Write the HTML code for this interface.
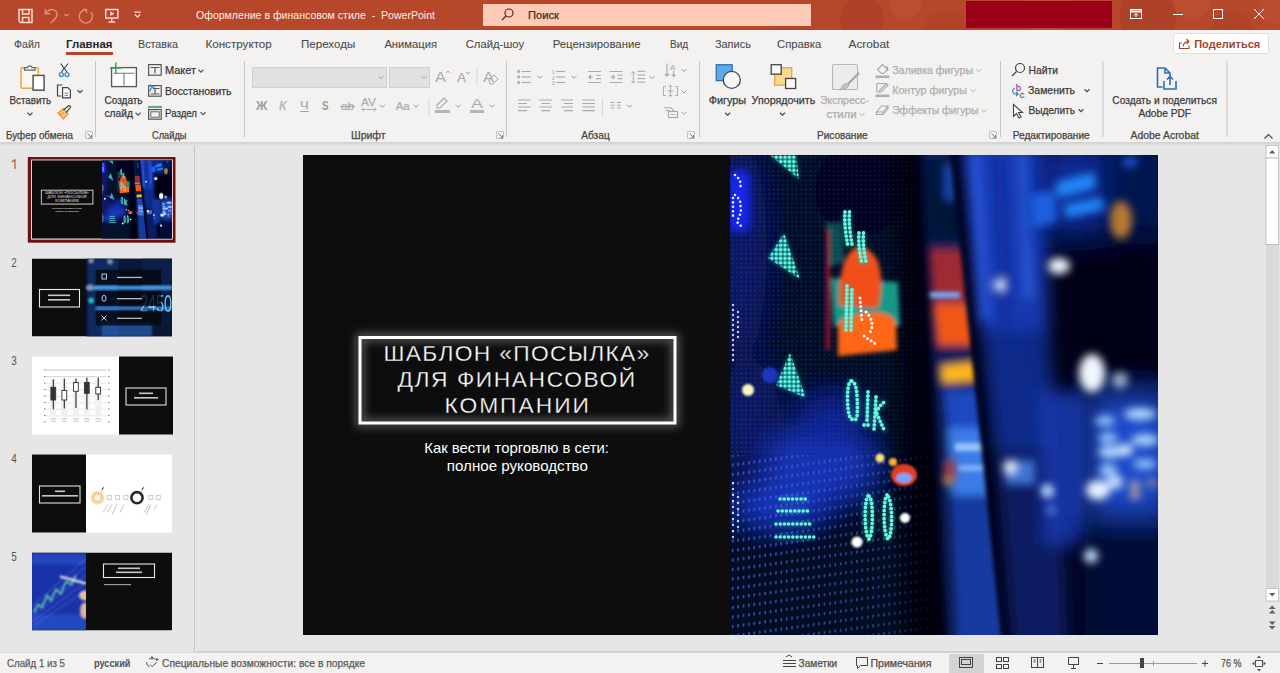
<!DOCTYPE html>
<html><head><meta charset="utf-8"><title>PowerPoint</title>
<style>html,body{margin:0;padding:0;width:1280px;height:673px;overflow:hidden;background:#e6e6e6;}
svg text{font-family:"Liberation Sans", sans-serif;}</style></head>
<body>
<svg width="1280" height="673" viewBox="0 0 1280 673" style="position:absolute;left:0;top:0">
<defs>
<filter id="b2" x="-50%" y="-50%" width="200%" height="200%"><feGaussianBlur stdDeviation="2"/></filter>
<filter id="b4" x="-50%" y="-50%" width="200%" height="200%"><feGaussianBlur stdDeviation="4"/></filter>
<filter id="b8" x="-50%" y="-50%" width="200%" height="200%"><feGaussianBlur stdDeviation="8"/></filter>
<filter id="b14" x="-50%" y="-50%" width="200%" height="200%"><feGaussianBlur stdDeviation="14"/></filter>
<filter id="b1" x="-50%" y="-50%" width="200%" height="200%"><feGaussianBlur stdDeviation="1"/></filter>
<filter id="glow" x="-20%" y="-30%" width="140%" height="160%"><feGaussianBlur stdDeviation="4"/></filter>
<pattern id="dots" x="0" y="0" width="5.2" height="5.2" patternUnits="userSpaceOnUse"><circle cx="2.6" cy="2.6" r="1.1" fill="#fff"/></pattern>
<pattern id="dotsT" x="0" y="0" width="5.2" height="5.2" patternUnits="userSpaceOnUse"><circle cx="2.6" cy="2.6" r="1.9" fill="#fff"/></pattern>
<clipPath id="photoclip"><rect x="730" y="155" width="428" height="480"/></clipPath>
<linearGradient id="shadow" x1="0" y1="0" x2="0" y2="1"><stop offset="0" stop-color="#d0d0d0"/><stop offset="1" stop-color="#e6e6e6"/></linearGradient>
<clipPath id="tbclip"><rect x="0" y="0" width="1280" height="30"/></clipPath>
</defs>
<g font-family='"Liberation Sans", sans-serif'>
<rect x="0" y="0" width="1280" height="673" fill="#e6e6e6" />
<rect x="0" y="0" width="1280" height="30" fill="#b7472a" />
<g opacity="0.4" clip-path="url(#tbclip)">
<circle cx="862" cy="18" r="22" fill="#a33d26"/>
<circle cx="945" cy="32" r="22" fill="#a83f27"/>
<circle cx="1148" cy="16" r="28" fill="#a23c26"/>
<circle cx="1232" cy="30" r="20" fill="#a83f27"/>
<circle cx="905" cy="4" r="16" fill="#c4573a"/>
<circle cx="1045" cy="8" r="26" fill="#c25539"/>
<circle cx="1192" cy="2" r="18" fill="#c4573a"/>
<circle cx="1275" cy="8" r="16" fill="#c25539"/>
<circle cx="790" cy="26" r="14" fill="#ac4229"/>
</g>
<rect x="0" y="30" width="1280" height="113" fill="#f3f2f1" />
<rect x="0" y="142" width="1280" height="4" fill="url(#shadow)" />
<rect x="0" y="652" width="1280" height="21" fill="#f3f2f1" />
<rect x="0" y="652" width="1280" height="1" fill="#d6d6d6" />
<g fill="none" stroke="#f7dcd2" stroke-width="1.5">
<path d="M19 9.5 h13 v13 h-11.5 l-1.5 -1.5 z"/><path d="M22.5 9.5 v4.5 h6.5 v-4.5"/><path d="M22.5 22.5 v-5 h6.5 v5"/>
</g>
<g fill="none" stroke="#e0907a" stroke-width="1.4">
<path d="M45.5 13.5 c2 -3 4 -4 6.5 -4 c3 0 5 2.2 5 5 c0 3 -2.5 5.5 -6.5 8.5"/><path d="M45.3 9 v4.8 h4.8"/>
<path d="M64.3 14 l2.2 2 l2.2 -2" stroke-width="1.1"/>
<path d="M85.5 9.8 a6.6 6.6 0 1 0 5.5 2.5"/><path d="M83 9.5 h3.5 v3.5" />
</g>
<g fill="none" stroke="#f7dcd2" stroke-width="1.4">
<path d="M105.7 9.5 h12.2 v8.5 h-12.2 z"/><path d="M111.8 18 v4 M108.5 22 h6.6"/>
</g>
<path d="M110.3 11.3 l4 2.4 l-4 2.4 z" fill="#f7dcd2"/>
<g fill="none" stroke="#f7dcd2" stroke-width="1.3"><path d="M134.3 12.2 h6.4"/><path d="M134.8 14.5 l2.7 2.5 l2.7 -2.5"/></g>
<text x="196" y="19" font-size="11.5" fill="#fdeee8" font-weight="normal" textLength="239.0" lengthAdjust="spacingAndGlyphs" >Оформление в финансовом стиле  -  PowerPoint</text>
<rect x="483" y="4" width="328" height="22" fill="#fccab5" />
<g fill="none" stroke="#5a2a1e" stroke-width="1.2"><circle cx="509" cy="13" r="4"/><path d="M506 16 l-4 4"/></g>
<text x="528" y="19" font-size="11.5" fill="#4a2a22" font-weight="normal" textLength="31.0" lengthAdjust="spacingAndGlyphs" stroke="#4a2a22" stroke-width="0.25" >Поиск</text>
<rect x="966" y="1" width="146" height="27" fill="#9b0019" />
<g fill="none" stroke="#ffffff" stroke-width="1">
<rect x="1130.5" y="9.5" width="11" height="9"/><path d="M1131 11.5 h10" stroke-width="2"/><path d="M1136 17.5 v-4 M1134 15.5 l2 -2 l2 2"/>
<path d="M1173 14.5 h10"/>
<rect x="1213.5" y="9.5" width="9" height="9"/>
<path d="M1254 9 l10 10 M1264 9 l-10 10"/>
</g>
<text x="14" y="48" font-size="11" fill="#4a4a4a" font-weight="normal" textLength="26.0" lengthAdjust="spacingAndGlyphs" stroke="#4a4a4a" stroke-width="0.08" >Файл</text>
<text x="205.4" y="48" font-size="11" fill="#4a4a4a" font-weight="normal" textLength="66.4" lengthAdjust="spacingAndGlyphs" stroke="#4a4a4a" stroke-width="0.08" >Конструктор</text>
<text x="301" y="48" font-size="11" fill="#4a4a4a" font-weight="normal" textLength="54.2" lengthAdjust="spacingAndGlyphs" stroke="#4a4a4a" stroke-width="0.08" >Переходы</text>
<text x="384.4" y="48" font-size="11" fill="#4a4a4a" font-weight="normal" textLength="52.6" lengthAdjust="spacingAndGlyphs" stroke="#4a4a4a" stroke-width="0.08" >Анимация</text>
<text x="465.7" y="48" font-size="11" fill="#4a4a4a" font-weight="normal" textLength="58.4" lengthAdjust="spacingAndGlyphs" stroke="#4a4a4a" stroke-width="0.08" >Слайд-шоу</text>
<text x="552.7" y="48" font-size="11" fill="#4a4a4a" font-weight="normal" textLength="88.0" lengthAdjust="spacingAndGlyphs" stroke="#4a4a4a" stroke-width="0.08" >Рецензирование</text>
<text x="669.9" y="48" font-size="11" fill="#4a4a4a" font-weight="normal" textLength="18.3" lengthAdjust="spacingAndGlyphs" stroke="#4a4a4a" stroke-width="0.08" >Вид</text>
<text x="714.9" y="48" font-size="11" fill="#4a4a4a" font-weight="normal" textLength="36.0" lengthAdjust="spacingAndGlyphs" stroke="#4a4a4a" stroke-width="0.08" >Запись</text>
<text x="777" y="48" font-size="11" fill="#4a4a4a" font-weight="normal" textLength="44.2" lengthAdjust="spacingAndGlyphs" stroke="#4a4a4a" stroke-width="0.08" >Справка</text>
<text x="848.5" y="48" font-size="11" fill="#4a4a4a" font-weight="normal" textLength="40.8" lengthAdjust="spacingAndGlyphs" stroke="#4a4a4a" stroke-width="0.08" >Acrobat</text>
<text x="138" y="48" font-size="11" fill="#4a4a4a" font-weight="normal" textLength="40.0" lengthAdjust="spacingAndGlyphs" stroke="#4a4a4a" stroke-width="0.08" >Вставка</text>
<text x="66" y="48" font-size="11" fill="#262626" font-weight="bold" textLength="46.5" lengthAdjust="spacingAndGlyphs" >Главная</text>
<rect x="66" y="52" width="47" height="3" fill="#b7472a" />
<rect x="1173.5" y="33.5" width="95" height="20" fill="#ffffff" stroke="#e1dfdd" rx="2"/>
<g fill="none" stroke="#a5442b" stroke-width="1.1"><path d="M1182 43 h-2.5 v5.5 h9.5 v-3"/><path d="M1183 46.5 c0.5 -3.5 2.5 -5 6 -5 M1186.5 39 l2.5 2.5 l-2.5 2.5"/></g>
<text x="1194.2" y="47.8" font-size="11.6" fill="#a5442b" font-weight="bold" textLength="66.1" lengthAdjust="spacingAndGlyphs" >Поделиться</text>
<rect x="95" y="61" width="1" height="76" fill="#c8c6c4" />
<rect x="244" y="61" width="1" height="76" fill="#c8c6c4" />
<rect x="506" y="61" width="1" height="76" fill="#c8c6c4" />
<rect x="699" y="61" width="1" height="76" fill="#c8c6c4" />
<rect x="1000" y="61" width="1" height="76" fill="#c8c6c4" />
<rect x="1102.5" y="61" width="1" height="76" fill="#c8c6c4" />
<rect x="1226.5" y="61" width="1" height="76" fill="#c8c6c4" />
<text x="6" y="138.5" font-size="10" fill="#444444" font-weight="normal" textLength="67.0" lengthAdjust="spacingAndGlyphs" stroke="#444444" stroke-width="0.25" >Буфер обмена</text>
<text x="152" y="138.5" font-size="10" fill="#444444" font-weight="normal" textLength="34.5" lengthAdjust="spacingAndGlyphs" stroke="#444444" stroke-width="0.25" >Слайды</text>
<text x="351" y="138.5" font-size="10" fill="#444444" font-weight="normal" textLength="34.6" lengthAdjust="spacingAndGlyphs" stroke="#444444" stroke-width="0.25" >Шрифт</text>
<text x="581.3" y="138.5" font-size="10" fill="#444444" font-weight="normal" textLength="28.4" lengthAdjust="spacingAndGlyphs" stroke="#444444" stroke-width="0.25" >Абзац</text>
<text x="817" y="138.5" font-size="10" fill="#444444" font-weight="normal" textLength="50.6" lengthAdjust="spacingAndGlyphs" stroke="#444444" stroke-width="0.25" >Рисование</text>
<text x="1012.7" y="138.5" font-size="10" fill="#444444" font-weight="normal" textLength="77.0" lengthAdjust="spacingAndGlyphs" stroke="#444444" stroke-width="0.25" >Редактирование</text>
<text x="1130.5" y="138.5" font-size="10" fill="#444444" font-weight="normal" textLength="68.4" lengthAdjust="spacingAndGlyphs" stroke="#444444" stroke-width="0.25" >Adobe Acrobat</text>
<g fill="none" stroke="#8a8886" stroke-width="1"><path d="M85.5 131.5 h7 v7 h-7 z" stroke="#c8c6c4"/><path d="M87.5 133.5 l4 4 M91.5 135 v3 h-3"/></g>
<g fill="none" stroke="#8a8886" stroke-width="1"><path d="M496.5 131.5 h7 v7 h-7 z" stroke="#c8c6c4"/><path d="M498.5 133.5 l4 4 M502.5 135 v3 h-3"/></g>
<g fill="none" stroke="#8a8886" stroke-width="1"><path d="M687.5 131.5 h7 v7 h-7 z" stroke="#c8c6c4"/><path d="M689.5 133.5 l4 4 M693.5 135 v3 h-3"/></g>
<g fill="none" stroke="#8a8886" stroke-width="1"><path d="M989.5 131.5 h7 v7 h-7 z" stroke="#c8c6c4"/><path d="M991.5 133.5 l4 4 M995.5 135 v3 h-3"/></g>
<path d="M1264.5 138.5 l4 -4 l4 4" fill="none" stroke="#444" stroke-width="1.2"/>
<rect x="21" y="67.7" width="17.3" height="20.5" rx="1.5" fill="#fdf8ef" stroke="#e8a840" stroke-width="1.5"/>
<path d="M24.5 70.2 h10.5 v-2.6 h-3 a2.3 2.3 0 0 0 -4.5 0 h-3 z" fill="#fff" stroke="#606060" stroke-width="1.2"/>
<rect x="33.1" y="75.4" width="11" height="14.8" fill="#fff" stroke="#555" stroke-width="1.5"/>
<text x="9.5" y="103.6" font-size="10.5" fill="#3b3b3b" font-weight="normal" textLength="41.5" lengthAdjust="spacingAndGlyphs" stroke="#3b3b3b" stroke-width="0.25" >Вставить</text>
<path d="M27.5 112.55 L30 115.05 L32.5 112.55" fill="none" stroke="#444" stroke-width="1.2"/>
<g fill="none" stroke="#3a3a3a" stroke-width="1.1"><path d="M60.5 63.5 l6.5 8.5 M68 63.5 l-6.5 8.5"/></g>
<g fill="none" stroke="#2f8ad0" stroke-width="1.3"><circle cx="61.3" cy="74.6" r="2"/><circle cx="66.9" cy="74.6" r="2"/></g>
<path d="M62.5 85 h-5 v11 h4" fill="none" stroke="#444" stroke-width="1.2"/>
<path d="M62.6 87.6 h5.2 l2.6 2.6 v7.7 h-7.8 z" fill="#fff" stroke="#444" stroke-width="1.2"/>
<path d="M64.6 93.2 h3.6 M64.6 95.4 h3.6" stroke="#666" stroke-width="0.9"/>
<path d="M77.5 90.25 L80 92.75 L82.5 90.25" fill="none" stroke="#444" stroke-width="1.2"/>
<path d="M57.8 113.2 l5.6 -4.6 l4.6 5.4 l-4.8 5 c-1.5 -2 -3.5 -4 -5.4 -5.8 z" fill="#f9c27a" stroke="#ea8c2a" stroke-width="1.1"/>
<path d="M60 115 l4.5 -3" stroke="#ea8c2a" stroke-width="0.9"/>
<path d="M63.5 110 l5 -4.2 a1.3 1.3 0 0 1 1.8 1.8 l-4.3 5" fill="none" stroke="#444" stroke-width="1.2"/>
<rect x="111.6" y="67.6" width="24.8" height="19" fill="#fff" stroke="#555" stroke-width="1.3"/>
<path d="M113.5 73.3 h21 M124 73.3 v12" fill="none" stroke="#777" stroke-width="1.1"/>
<path d="M115.8 62.5 v11.5 M110 68 h12" stroke="#3fa060" stroke-width="1.5"/>
<text x="104.5" y="103.8" font-size="10.5" fill="#3b3b3b" font-weight="normal" textLength="38.1" lengthAdjust="spacingAndGlyphs" stroke="#3b3b3b" stroke-width="0.25" >Создать</text>
<text x="104.5" y="117.4" font-size="10.5" fill="#3b3b3b" font-weight="normal" textLength="28.5" lengthAdjust="spacingAndGlyphs" stroke="#3b3b3b" stroke-width="0.25" >слайд</text>
<path d="M135.5 112.75 L138 115.25 L140.5 112.75" fill="none" stroke="#555" stroke-width="1.1"/>
<g fill="none" stroke="#555" stroke-width="1.2">
<rect x="148.6" y="64.6" width="12.6" height="10.6"/><path d="M150.5 67.5 h9 M155 67.5 v5.8"/>
<rect x="148.6" y="85.6" width="12.6" height="10.6"/><path d="M153 88.5 h6.5 M155 88.5 v5.8 M150.5 94 h9"/>
<rect x="148.6" y="109.6" width="12.6" height="9.6"/><rect x="150.8" y="111.8" width="8.4" height="5.4" stroke-width="0.9"/>
</g>
<path d="M148 107 h14" stroke="#5fae78" stroke-width="2.2"/>
<path d="M150 91.5 c0 -3 2 -5 5 -4.5 M148 87.5 l2.2 -2.5 l2.2 2.5" fill="none" stroke="#2f8ad0" stroke-width="1.2"/>
<text x="165" y="74.3" font-size="10.5" fill="#3b3b3b" font-weight="normal" textLength="31.0" lengthAdjust="spacingAndGlyphs" stroke="#3b3b3b" stroke-width="0.25" >Макет</text>
<path d="M198.5 69.75 L201 72.25 L203.5 69.75" fill="none" stroke="#555" stroke-width="1.1"/>
<text x="165" y="95.3" font-size="10.5" fill="#3b3b3b" font-weight="normal" textLength="66.4" lengthAdjust="spacingAndGlyphs" stroke="#3b3b3b" stroke-width="0.25" >Восстановить</text>
<text x="165" y="116.8" font-size="10.5" fill="#3b3b3b" font-weight="normal" textLength="32.0" lengthAdjust="spacingAndGlyphs" stroke="#3b3b3b" stroke-width="0.25" >Раздел</text>
<path d="M200.5 112.25 L203 114.75 L205.5 112.25" fill="none" stroke="#555" stroke-width="1.1"/>
<rect x="252.5" y="67.5" width="134" height="20" fill="#e1e1e1" stroke="#d2d0ce"/>
<rect x="389.5" y="67.5" width="40" height="20" fill="#e1e1e1" stroke="#d2d0ce"/>
<path d="M378.5 76.25 L381 78.75 L383.5 76.25" fill="none" stroke="#9a9a9a" stroke-width="1"/>
<path d="M421.5 76.25 L424 78.75 L426.5 76.25" fill="none" stroke="#9a9a9a" stroke-width="1"/>
<text x="435" y="82" font-size="15" fill="#adadad" font-weight="normal" textLength="11.0" lengthAdjust="spacingAndGlyphs" >A</text>
<path d="M446 73 l2 -2 l2 2" fill="none" stroke="#a6a6a6" stroke-width="1"/>
<text x="457" y="82" font-size="12.5" fill="#adadad" font-weight="normal" textLength="9.0" lengthAdjust="spacingAndGlyphs" stroke="#adadad" stroke-width="0.25" >A</text>
<path d="M466 72 l2 2 l2 -2" fill="none" stroke="#a6a6a6" stroke-width="1"/>
<rect x="476.5" y="68" width="1" height="18" fill="#d6d6d6" />
<text x="483" y="82" font-size="14" fill="#adadad" font-weight="normal" textLength="11.0" lengthAdjust="spacingAndGlyphs" >A</text>
<path d="M489 80 l5 -5 l4 4 l-5 5 h-3 z" fill="none" stroke="#a6a6a6" stroke-width="1"/>
<text x="256" y="110" font-size="12.5" fill="#9a9a9a" font-weight="bold" textLength="11.4" lengthAdjust="spacingAndGlyphs" >Ж</text>
<text x="279" y="110" font-size="12" fill="#adadad" font-weight="normal" textLength="7.4" lengthAdjust="spacingAndGlyphs" stroke="#adadad" stroke-width="0.25" font-style="italic">К</text>
<text x="300" y="109" font-size="10.5" fill="#adadad" font-weight="normal" textLength="8.6" lengthAdjust="spacingAndGlyphs" stroke="#adadad" stroke-width="0.25" >Ч</text>
<rect x="300" y="111" width="9" height="1" fill="#a6a6a6" />
<text x="322" y="110" font-size="12.5" fill="#9a9a9a" font-weight="bold" textLength="6.5" lengthAdjust="spacingAndGlyphs" >S</text>
<text x="341" y="110" font-size="10.5" fill="#adadad" font-weight="normal" textLength="13.0" lengthAdjust="spacingAndGlyphs" stroke="#adadad" stroke-width="0.25" >ab</text>
<rect x="340" y="106" width="15" height="1" fill="#a6a6a6" />
<text x="361" y="106" font-size="11" fill="#adadad" font-weight="normal" textLength="15.0" lengthAdjust="spacingAndGlyphs" stroke="#adadad" stroke-width="0.25" >AV</text>
<path d="M362 109.5 h14 M364 107.5 l-2 2 l2 2 M374 107.5 l2 2 l-2 2" fill="none" stroke="#a6a6a6" stroke-width="0.9"/>
<path d="M380.0 104.75 L382.5 107.25 L385.0 104.75" fill="none" stroke="#9a9a9a" stroke-width="1"/>
<text x="395.7" y="110" font-size="10.5" fill="#adadad" font-weight="normal" textLength="14.1" lengthAdjust="spacingAndGlyphs" stroke="#adadad" stroke-width="0.25" >Aa</text>
<path d="M413.5 104.75 L416 107.25 L418.5 104.75" fill="none" stroke="#9a9a9a" stroke-width="1"/>
<rect x="428.5" y="98" width="1" height="18" fill="#d6d6d6" />
<path d="M437 105 l7 -7 l3 3 l-7 7 h-3 z" fill="none" stroke="#a6a6a6" stroke-width="1.1"/>
<rect x="435" y="110" width="15" height="3" fill="#b4b4b4" />
<path d="M455.5 104.75 L458 107.25 L460.5 104.75" fill="none" stroke="#9a9a9a" stroke-width="1"/>
<text x="471" y="108" font-size="13" fill="#adadad" font-weight="normal" textLength="12.0" lengthAdjust="spacingAndGlyphs" >A</text>
<rect x="470" y="110" width="14" height="3" fill="#b4b4b4" />
<path d="M489.5 104.75 L492 107.25 L494.5 104.75" fill="none" stroke="#9a9a9a" stroke-width="1"/>
<g stroke="#a8a8a8" stroke-width="1.1" fill="none">
<rect x="517.3" y="70.2" width="2.6" height="2.6" fill="#a8a8a8" stroke="none"/><path d="M521.5 71.5 h9.3"/>
<path d="M556.3 71.5 h8.7"/>
<rect x="517.3" y="75.7" width="2.6" height="2.6" fill="#a8a8a8" stroke="none"/><path d="M521.5 77 h9.3"/>
<path d="M556.3 77 h8.7"/>
<rect x="517.3" y="81.2" width="2.6" height="2.6" fill="#a8a8a8" stroke="none"/><path d="M521.5 82.5 h9.3"/>
<path d="M556.3 82.5 h8.7"/>
<path d="M588.3 71.5 h12.6 M596 75.2 h5 M596 78.6 h5 M588.3 82.5 h12.6 M589 77 h4 M591 75 l-2 2 l2 2"/>
<path d="M609.7 71.5 h12.6 M617.6 75.2 h4.7 M617.6 78.6 h4.7 M609.7 82.5 h12.6 M610.5 77 h4 M612.5 75 l2 2 l-2 2"/>
<path d="M637.5 71.3 h7.7"/>
<path d="M637.5 75 h7.7"/>
<path d="M637.5 78.6 h7.7"/>
<path d="M637.5 82.2 h7.7"/>
<path d="M633.3 71.5 v11.5 M631.3 73.5 l2 -2 l2 2 M631.3 81 l2 2 l2 -2" stroke-width="0.9"/>
<path d="M518 100 h12.7 M539.5 100 h12.5 M561 100 h12 M582.3 100 h12.6"/>
<path d="M518 103.5 h9 M541.5 103.5 h8.5 M564 103.5 h9 M582.3 103.5 h12.6"/>
<path d="M518 107 h12.7 M539.5 107 h12.5 M561 107 h12 M582.3 107 h12.6"/>
<path d="M518 110.6 h9 M541.5 110.6 h8.5 M564 110.6 h9 M582.3 110.6 h12.6"/>
</g>
<text x="551.8" y="74" font-size="5.5" fill="#a8a8a8">1</text><text x="551.8" y="79.5" font-size="5.5" fill="#a8a8a8">2</text><text x="551.8" y="85" font-size="5.5" fill="#a8a8a8">3</text>
<path d="M537.1 75.75 L539.6 78.25 L542.1 75.75" fill="none" stroke="#9a9a9a" stroke-width="1"/>
<path d="M571.5 75.75 L574 78.25 L576.5 75.75" fill="none" stroke="#9a9a9a" stroke-width="1"/>
<path d="M649.3 76.25 L651.8 78.75 L654.3 76.25" fill="none" stroke="#9a9a9a" stroke-width="1"/>
<rect x="602" y="98" width="1" height="18" fill="#d6d6d6" />
<g stroke="#a8a8a8" stroke-width="1.1" fill="none"><path d="M610.5 102.5 h4 M610.5 105.3 h4 M610.5 108 h4 M617 102.5 h4 M617 105.3 h4 M617 108 h4"/></g>
<path d="M627.0 104.75 L629.5 107.25 L632.0 104.75" fill="none" stroke="#9a9a9a" stroke-width="1"/>
<g stroke="#a6a6a6" stroke-width="1.1" fill="none">
<path d="M667 63.5 v12.5 M664.8 73.8 l2.2 2.2 l2.2 -2.2 M673.7 70.5 v6 M671.8 74.6 l1.9 1.9 l1.9 -1.9"/>
<path d="M666 86.5 h-2.5 v9 h2.5 M675 86.5 h2.5 v9 h-2.5 M670.5 85 v11.5 M668.8 86.8 l1.7 -1.7 l1.7 1.7 M668.8 94.8 l1.7 1.7 l1.7 -1.7 M667.5 91 h6" stroke-width="0.9"/>
<path d="M664 107.8 h7 l3.5 3.5 M665.5 110.5 h4.5"/><rect x="668.5" y="111.5" width="9" height="6"/><path d="M670.5 114.5 h5" stroke-width="0.8"/>
</g>
<text x="670" y="69.5" font-size="8" fill="#a6a6a6">A</text>
<path d="M681.6 68.95 L684.1 71.45 L686.6 68.95" fill="none" stroke="#9a9a9a" stroke-width="1"/>
<path d="M681.6 90.45 L684.1 92.95 L686.6 90.45" fill="none" stroke="#9a9a9a" stroke-width="1"/>
<path d="M681.6 111.85 L684.1 114.35 L686.6 111.85" fill="none" stroke="#9a9a9a" stroke-width="1"/>
<rect x="716.2" y="64.7" width="16" height="16" fill="#5eaae8" stroke="#2f6aa6" stroke-width="1.2"/>
<circle cx="731.8" cy="79.9" r="8.5" fill="#f6f6f6" stroke="#444" stroke-width="1.3"/>
<text x="708.7" y="103.8" font-size="10.5" fill="#3b3b3b" font-weight="normal" textLength="37.5" lengthAdjust="spacingAndGlyphs" stroke="#3b3b3b" stroke-width="0.25" >Фигуры</text>
<path d="M725.2 112.75 L727.7 115.25 L730.2 112.75" fill="none" stroke="#444" stroke-width="1.1"/>
<rect x="774.7" y="67.7" width="17" height="17.5" fill="#f8d98e" stroke="#e3a642" stroke-width="1.3"/>
<rect x="771.2" y="64.7" width="10" height="9.5" fill="#f8f8f8" stroke="#444" stroke-width="1.3"/>
<rect x="785.6" y="78.5" width="10" height="10" fill="#f8f8f8" stroke="#444" stroke-width="1.3"/>
<text x="751.6" y="103.8" font-size="10.5" fill="#3b3b3b" font-weight="normal" textLength="63.7" lengthAdjust="spacingAndGlyphs" stroke="#3b3b3b" stroke-width="0.25" >Упорядочить</text>
<path d="M780.0 112.75 L782.5 115.25 L785.0 112.75" fill="none" stroke="#444" stroke-width="1.1"/>
<rect x="832.5" y="64.5" width="25" height="25" fill="#ececec" stroke="#b6b6b6" stroke-width="1.1" rx="1"/>
<path d="M858.5 73.5 l-11 11" stroke="#a6a6a6" stroke-width="2.2" stroke-linecap="round"/>
<path d="M847.5 83.5 c-3 0 -5 2 -6 4 l-1.5 2.2 c2.5 0.3 5 -0.5 7 -2 c1.5 -1.2 2 -2.5 1.5 -3.5 z" fill="#c4c4c4" stroke="#a6a6a6" stroke-width="0.9"/>
<text x="820" y="103.8" font-size="10.5" fill="#adadad" font-weight="normal" textLength="48.7" lengthAdjust="spacingAndGlyphs" stroke="#adadad" stroke-width="0.25" >Экспресс-</text>
<text x="826.5" y="117.8" font-size="10.5" fill="#adadad" font-weight="normal" textLength="30.0" lengthAdjust="spacingAndGlyphs" stroke="#adadad" stroke-width="0.25" >стили</text>
<path d="M859.5 113.25 L862 115.75 L864.5 113.25" fill="none" stroke="#b0b0b0" stroke-width="1"/>
<g fill="none" stroke="#a6a6a6" stroke-width="1.1">
<path d="M877.5 69.5 l5 -5 l5 5 l-4 4 h-2 z"/><path d="M886 66 c1.5 1 2 3 1.5 5"/>
<path d="M876.8 83.5 h9 M876.8 83.5 v8.5 h2" /><path d="M879.5 90.5 l7 -7 l1.5 1.5 l-7 7 h-1.5 z"/>
<path d="M876.5 112 l5 -6 h6.5 l-5 6 z M876.5 112 v2.5 h6.5 l5 -6 v-2.5 M883 112 v2.5"/>
</g>
<rect x="875.5" y="75.5" width="14" height="2.6" fill="#b0b0b0" />
<rect x="875.5" y="94.5" width="14" height="2.6" fill="#b0b0b0" />
<text x="892.2" y="73.6" font-size="10.5" fill="#adadad" font-weight="normal" textLength="80.8" lengthAdjust="spacingAndGlyphs" stroke="#adadad" stroke-width="0.25" >Заливка фигуры</text>
<path d="M976.4 69.25 L978.9 71.75 L981.4 69.25" fill="none" stroke="#b0b0b0" stroke-width="1"/>
<text x="892.2" y="94.4" font-size="10.5" fill="#adadad" font-weight="normal" textLength="74.8" lengthAdjust="spacingAndGlyphs" stroke="#adadad" stroke-width="0.25" >Контур фигуры</text>
<path d="M970.5 89.25 L973 91.75 L975.5 89.25" fill="none" stroke="#b0b0b0" stroke-width="1"/>
<text x="892.2" y="114.3" font-size="10.5" fill="#adadad" font-weight="normal" textLength="86.2" lengthAdjust="spacingAndGlyphs" stroke="#adadad" stroke-width="0.25" >Эффекты фигуры</text>
<path d="M981.5 109.75 L984 112.25 L986.5 109.75" fill="none" stroke="#b0b0b0" stroke-width="1"/>
<g fill="none" stroke="#444" stroke-width="1.2"><circle cx="1020" cy="68" r="4.5"/><path d="M1016.5 71.5 l-4.5 4.5"/></g>
<text x="1028.5" y="73.6" font-size="10.5" fill="#3b3b3b" font-weight="normal" textLength="29.5" lengthAdjust="spacingAndGlyphs" stroke="#3b3b3b" stroke-width="0.25" >Найти</text>
<text x="1015.8" y="90.5" font-size="9.5" fill="#9b4fb8" stroke="#9b4fb8" stroke-width="0.3">b</text><text x="1019.6" y="97.8" font-size="9.5" fill="#3a86a8" stroke="#3a86a8" stroke-width="0.3">c</text>
<path d="M1014.5 88 c-2.5 1.5 -2.5 4.5 0 6 h3.5 M1016 92 l2 2 l-2 2" fill="none" stroke="#3a86a8" stroke-width="1.2"/>
<text x="1028" y="94.4" font-size="10.5" fill="#3b3b3b" font-weight="normal" textLength="47.0" lengthAdjust="spacingAndGlyphs" stroke="#3b3b3b" stroke-width="0.25" >Заменить</text>
<path d="M1084.5 89.25 L1087 91.75 L1089.5 89.25" fill="none" stroke="#444" stroke-width="1.1"/>
<path d="M1013.5 104.5 v12 l3 -3 l2.5 4.5 l2 -1 l-2.5 -4.5 h4 z" fill="#fff" stroke="#444" stroke-width="1.1"/>
<text x="1028.5" y="114.3" font-size="10.5" fill="#3b3b3b" font-weight="normal" textLength="46.5" lengthAdjust="spacingAndGlyphs" stroke="#3b3b3b" stroke-width="0.25" >Выделить</text>
<path d="M1078.5 109.25 L1081 111.75 L1083.5 109.25" fill="none" stroke="#444" stroke-width="1.1"/>
<g fill="none" stroke="#2c6fb7" stroke-width="1.6"><path d="M1165 68 h-7.5 v19 h5 M1165 68 l5 5 v3 M1165 68 v5 h5"/><path d="M1164 81 v8 h12 v-8 M1170 85 v-8 M1167 79.5 l3 -3 l3 3"/></g>
<text x="1112.3" y="103.8" font-size="10.5" fill="#3b3b3b" font-weight="normal" textLength="104.7" lengthAdjust="spacingAndGlyphs" stroke="#3b3b3b" stroke-width="0.25" >Создать и поделиться</text>
<text x="1138.4" y="117.4" font-size="10.5" fill="#3b3b3b" font-weight="normal" textLength="52.6" lengthAdjust="spacingAndGlyphs" stroke="#3b3b3b" stroke-width="0.25" >Adobe PDF</text>
<rect x="194" y="146" width="1" height="506" fill="#c8c6c4" />
<path d="M15 159.3 v9.7 M15 159.5 l-3.2 2.4" fill="none" stroke="#c35b45" stroke-width="1.3"/>
<text x="11.3" y="267.1" font-size="13.5" fill="#555555" font-weight="normal" textLength="5.5" lengthAdjust="spacingAndGlyphs" >2</text>
<text x="11.3" y="365.1" font-size="13.5" fill="#555555" font-weight="normal" textLength="5.5" lengthAdjust="spacingAndGlyphs" >3</text>
<text x="11.3" y="463.1" font-size="13.5" fill="#555555" font-weight="normal" textLength="5.5" lengthAdjust="spacingAndGlyphs" >4</text>
<text x="11.3" y="561.1" font-size="13.5" fill="#555555" font-weight="normal" textLength="5.5" lengthAdjust="spacingAndGlyphs" >5</text>
<rect x="29.5" y="158.7" width="144.3" height="82.3" fill="none" stroke="#6e1010" stroke-width="3.4"/>
<rect x="31.6" y="160" width="140.8" height="79" fill="none" stroke="#f6dede" stroke-width="1"/>
<clipPath id="tc2"><rect x="32" y="258.5" width="140" height="78"/></clipPath>
<clipPath id="tc5"><rect x="32" y="552.5" width="140" height="78"/></clipPath>
<use href="#slide1" transform="translate(32,160.5) scale(0.16374,0.16250) translate(-303,-155)"/>
<g clip-path="url(#tc2)">
<rect x="32" y="258.5" width="140" height="78" fill="#0d0d0d" />
<rect x="86" y="258.5" width="86" height="78" fill="#0a1838"/>
<g filter="url(#b1)">
<rect x="88" y="258.5" width="30" height="78" fill="#12306a" opacity="0.8"/>
<rect x="142" y="258.5" width="30" height="40" fill="#0c2250" opacity="0.8"/>
<rect x="86" y="286.0" width="86" height="3.5" fill="#48a0e8"/>
<rect x="96" y="306.5" width="76" height="3.5" fill="#3a88d8" opacity="0.9"/>
<rect x="102" y="322.5" width="50" height="14" fill="#2a60b0" opacity="0.7"/>
<circle cx="91" cy="260.5" r="2.5" fill="#8a98a8"/>
<circle cx="110" cy="261.5" r="2.5" fill="#8a98a8"/>
<circle cx="90" cy="287.5" r="3" fill="#8a98a8"/>
<circle cx="91" cy="300.5" r="2.5" fill="#30c8d8"/>
</g>
<text x="140" y="311.5" font-size="24" fill="#70d8ff" opacity="0.9" textLength="32" lengthAdjust="spacingAndGlyphs">2450</text>
<rect x="39.5" y="289.5" width="40" height="17.5" fill="none" stroke="#e8e8e8" stroke-width="1.1"/>
<rect x="48" y="294.5" width="22" height="1.6" fill="#c8c8c8" />
<rect x="48" y="299.0" width="22" height="1.6" fill="#c8c8c8" />
<rect x="95.6" y="269.8" width="65.6" height="14.8" fill="#05080f" opacity="0.78"/>
<rect x="117" y="276.8" width="25" height="1.3" fill="#b8b8b8" />
<rect x="95.6" y="291.0" width="65.6" height="14.8" fill="#05080f" opacity="0.78"/>
<rect x="117" y="298.0" width="25" height="1.3" fill="#b8b8b8" />
<rect x="95.6" y="310.7" width="65.6" height="14.8" fill="#05080f" opacity="0.78"/>
<rect x="117" y="317.7" width="25" height="1.3" fill="#b8b8b8" />
<g fill="none" stroke="#ddd" stroke-width="0.9"><rect x="102" y="274.0" width="4.5" height="5"/><ellipse cx="104" cy="298.3" rx="2" ry="3"/><path d="M101.5 315.5 l5 5 M106.5 315.5 l-5 5"/></g>
</g>
<rect x="32" y="356.5" width="140" height="78" fill="#ffffff" />
<rect x="119" y="356.5" width="54" height="78" fill="#0d0d0d" />
<rect x="126" y="388.0" width="40" height="17" fill="none" stroke="#e0e0e0" stroke-width="1.1"/>
<rect x="139" y="392.5" width="14" height="1.6" fill="#c8c8c8" />
<rect x="134" y="397.0" width="24" height="1.6" fill="#c8c8c8" />
<rect x="46" y="369.5" width="60" height="1.6" fill="#eeeeee" />
<rect x="46" y="376.0" width="60" height="1.6" fill="#eeeeee" />
<rect x="46" y="382.5" width="60" height="1.6" fill="#eeeeee" />
<rect x="46" y="389.0" width="60" height="1.6" fill="#eeeeee" />
<rect x="46" y="395.5" width="60" height="1.6" fill="#eeeeee" />
<rect x="46" y="402.0" width="60" height="1.6" fill="#eeeeee" />
<rect x="46" y="408.5" width="60" height="1.6" fill="#eeeeee" />
<rect x="46" y="415.0" width="60" height="1.6" fill="#eeeeee" />
<rect x="46" y="369.5" width="60" height="0.8" fill="#cfcfcf" />
<rect x="46" y="376.0" width="60" height="0.8" fill="#d8d8d8" />
<rect x="44" y="369.5" width="1.5" height="1" fill="#777" />
<rect x="108" y="369.5" width="1.5" height="1" fill="#777" />
<rect x="44" y="376.0" width="1.5" height="1" fill="#777" />
<rect x="108" y="376.0" width="1.5" height="1" fill="#777" />
<rect x="44" y="382.5" width="1.5" height="1" fill="#777" />
<rect x="108" y="382.5" width="1.5" height="1" fill="#777" />
<rect x="44" y="389.0" width="1.5" height="1" fill="#777" />
<rect x="108" y="389.0" width="1.5" height="1" fill="#777" />
<rect x="44" y="395.5" width="1.5" height="1" fill="#777" />
<rect x="108" y="395.5" width="1.5" height="1" fill="#777" />
<rect x="44" y="402.0" width="1.5" height="1" fill="#777" />
<rect x="108" y="402.0" width="1.5" height="1" fill="#777" />
<rect x="44" y="408.5" width="1.5" height="1" fill="#777" />
<rect x="108" y="408.5" width="1.5" height="1" fill="#777" />
<rect x="44" y="415.0" width="1.5" height="1" fill="#777" />
<rect x="108" y="415.0" width="1.5" height="1" fill="#777" />
<rect x="44" y="421.5" width="1.5" height="1" fill="#777" />
<rect x="108" y="421.5" width="1.5" height="1" fill="#777" />
<rect x="50.3" y="379.5" width="6" height="37" fill="#f0f0f0" />
<rect x="61.3" y="379.5" width="6" height="37" fill="#f0f0f0" />
<rect x="72.9" y="379.5" width="6" height="37" fill="#f0f0f0" />
<rect x="83.8" y="379.5" width="6" height="37" fill="#f0f0f0" />
<rect x="95.2" y="379.5" width="6" height="37" fill="#f0f0f0" />
<rect x="52.699999999999996" y="379.3" width="1.3" height="29.999999999999996" fill="#444" />
<rect x="50.9" y="387.3" width="4.8" height="12.7" fill="#333" stroke="#333" stroke-width="0.9"/>
<rect x="63.699999999999996" y="378.5" width="1.3" height="30" fill="#444" />
<rect x="61.9" y="390.5" width="4.8" height="9.5" fill="#fff" stroke="#333" stroke-width="0.9"/>
<rect x="75.30000000000001" y="378.5" width="1.3" height="29.5" fill="#444" />
<rect x="73.5" y="382.5" width="4.8" height="8.799999999999997" fill="#fff" stroke="#333" stroke-width="0.9"/>
<rect x="86.2" y="377.5" width="1.3" height="32" fill="#444" />
<rect x="84.39999999999999" y="382.5" width="4.8" height="10.799999999999997" fill="#333" stroke="#333" stroke-width="0.9"/>
<rect x="97.60000000000001" y="377.5" width="1.3" height="22.5" fill="#444" />
<rect x="95.8" y="387.3" width="4.8" height="6.699999999999999" fill="#fff" stroke="#333" stroke-width="0.9"/>
<rect x="50.3" y="418.5" width="6" height="1" fill="#bbb" />
<rect x="50.8" y="421.0" width="5" height="1" fill="#ccc" />
<rect x="61.3" y="418.5" width="6" height="1" fill="#bbb" />
<rect x="61.8" y="421.0" width="5" height="1" fill="#ccc" />
<rect x="72.9" y="418.5" width="6" height="1" fill="#bbb" />
<rect x="73.4" y="421.0" width="5" height="1" fill="#ccc" />
<rect x="83.8" y="418.5" width="6" height="1" fill="#bbb" />
<rect x="84.3" y="421.0" width="5" height="1" fill="#ccc" />
<rect x="95.2" y="418.5" width="6" height="1" fill="#bbb" />
<rect x="95.7" y="421.0" width="5" height="1" fill="#ccc" />
<rect x="32" y="454.5" width="140" height="78" fill="#ffffff" />
<rect x="32" y="454.5" width="54" height="78" fill="#0d0d0d" />
<rect x="39.5" y="486.0" width="40.5" height="17" fill="none" stroke="#e0e0e0" stroke-width="1.1"/>
<rect x="55" y="490.5" width="10" height="1.6" fill="#c8c8c8" />
<rect x="42" y="495.0" width="36" height="1.6" fill="#c8c8c8" />
<circle cx="97.5" cy="497.7" r="4.8" fill="#fff8ec" stroke="#f0b860" stroke-width="2.6" filter="url(#b1)"/>
<circle cx="137" cy="497.7" r="5.6" fill="none" stroke="#2a2a2a" stroke-width="2.6"/>
<rect x="107.3" y="495.5" width="4" height="4" fill="none" stroke="#c8c8c8" stroke-width="0.9"/>
<rect x="115.6" y="495.5" width="4" height="4" fill="none" stroke="#c8c8c8" stroke-width="0.9"/>
<rect x="123.9" y="495.5" width="4" height="4" fill="none" stroke="#c8c8c8" stroke-width="0.9"/>
<rect x="148.8" y="495.5" width="4" height="4" fill="none" stroke="#c8c8c8" stroke-width="0.9"/>
<rect x="156.3" y="495.5" width="4" height="4" fill="none" stroke="#c8c8c8" stroke-width="0.9"/>
<g stroke="#aaa" stroke-width="0.7"><path d="M101 491.5 l3 -5 M141 491.5 l3 -5"/><path d="M108 504.5 l-5 8 M112 504.5 l-5 8 M117 504.5 l-5 10 M124 504.5 l-4 8 M149 504.5 l-5 8 M151 504.5 l-5 10 M157 504.5 l-3 5"/></g>
<path d="M102 489.5 l1.5 -2 M142 489.5 l1.5 -2" stroke="#446" stroke-width="1.2"/>
<g clip-path="url(#tc5)">
<rect x="32" y="552.5" width="140" height="78" fill="#0d0d0d" />
<clipPath id="t5p"><rect x="32" y="552.5" width="54" height="78"/></clipPath>
<g clip-path="url(#t5p)">
<rect x="32" y="552.5" width="54" height="78" fill="#1a32a8"/>
<g filter="url(#b1)">
<rect x="32" y="554.5" width="54" height="10" fill="#2a50c8" opacity="0.7"/>
<rect x="32" y="614.5" width="54" height="16" fill="#2a58d0" opacity="0.6"/>
<path d="M32 626.5 L86 590.5" stroke="#6a80e8" stroke-width="0.6" />
<path d="M32 621.5 L86 582.5" stroke="#6a80e8" stroke-width="0.6" />
<path d="M32 616.5 L86 574.5" stroke="#6a80e8" stroke-width="0.6" />
<path d="M32 611.5 L86 566.5" stroke="#6a80e8" stroke-width="0.6" />
<path d="M32 606.5 L86 558.5" stroke="#6a80e8" stroke-width="0.6" />
<path d="M34 612.5 l4 -8 l4 3 l5 -12 l4 5 l5 -11 l5 4 l5 -12 l5 3 l5 -9" stroke="#60c8a8" fill="none" stroke-width="1.8"/>
<path d="M60 576.5 L86 583.5" stroke="#f0f0f0" stroke-width="2.2"/>
<ellipse cx="85" cy="595.5" rx="6" ry="5" fill="#e6c0a8"/>
<ellipse cx="85" cy="610.5" rx="5" ry="8" fill="#dcb49a"/>
</g></g>
<rect x="103.5" y="564.0" width="51" height="13.5" fill="none" stroke="#e8e8e8" stroke-width="1.1"/>
<rect x="118" y="567.5" width="22" height="1.6" fill="#c8c8c8" />
<rect x="116" y="571.5" width="26" height="1.6" fill="#c8c8c8" />
<rect x="104" y="584.0" width="27" height="1.2" fill="#999" />
</g>
<rect x="197" y="651" width="1083" height="1" fill="#d0d0d0" />
<rect x="1266" y="158" width="13" height="431" fill="#dadada" />
<rect x="1266" y="145.5" width="12.5" height="12.5" fill="#fff" stroke="#c2c2c2"/>
<path d="M1269 153.5 l3.2 -3.5 l3.2 3.5 z" fill="#606060"/>
<rect x="1266" y="158" width="12.5" height="86.5" fill="#fff" stroke="#c2c2c2"/>
<rect x="1266" y="588.5" width="12.5" height="12.5" fill="#fff" stroke="#c2c2c2"/>
<path d="M1269 593 l3.2 3.5 l3.2 -3.5 z" fill="#606060"/>
<path d="M1268.8 609 l3.4 -3.4 l3.4 3.4 z M1268.8 613.5 l3.4 -3.4 l3.4 3.4 z M1268.8 621.5 l3.4 3.4 l3.4 -3.4 z M1268.8 626 l3.4 3.4 l3.4 -3.4 z" fill="#606060"/>
<g id="slide1">
<rect x="303" y="155" width="855" height="480" fill="#0d0d0d" />
<rect x="360" y="337.5" width="315" height="85.5" fill="none" stroke="#ffffff" stroke-width="9" opacity="0.28" filter="url(#glow)"/>
<rect x="360" y="337.5" width="315" height="85.5" fill="none" stroke="#ffffff" stroke-width="3"/>
<text x="383.5" y="361" font-size="22.8" fill="#ffffff" font-weight="normal" textLength="265.8" lengthAdjust="spacing" stroke="#0d0d0d" stroke-width="0.3">ШАБЛОН «ПОСЫЛКА»</text>
<text x="397.4" y="386.8" font-size="22.8" fill="#ffffff" font-weight="normal" textLength="237.8" lengthAdjust="spacing" stroke="#0d0d0d" stroke-width="0.3">ДЛЯ ФИНАНСОВОЙ</text>
<text x="444.4" y="412.6" font-size="22.8" fill="#ffffff" font-weight="normal" textLength="144.5" lengthAdjust="spacing" stroke="#0d0d0d" stroke-width="0.3">КОМПАНИИ</text>
<text x="424.3" y="452.8" font-size="14.5" fill="#ffffff" font-weight="normal" textLength="184.7" lengthAdjust="spacingAndGlyphs" >Как вести торговлю в сети:</text>
<text x="446.8" y="471.3" font-size="14.5" fill="#ffffff" font-weight="normal" textLength="141.1" lengthAdjust="spacingAndGlyphs" >полное руководство</text>
<g clip-path="url(#photoclip)">
<rect x="730" y="155" width="428" height="480" fill="#030620" />
<g filter="url(#b14)">
<path d="M700 140 L912 140 L935 650 L700 650 Z" fill="#040822"/>
<ellipse cx="742" cy="250" rx="25" ry="110" fill="#0a1264"/>
<ellipse cx="750" cy="420" rx="30" ry="60" fill="#0a1460"/>
<ellipse cx="820" cy="465" rx="55" ry="38" fill="#1530b0"/>
<ellipse cx="780" cy="505" rx="45" ry="20" fill="#1634c0"/>
<ellipse cx="860" cy="190" rx="45" ry="45" fill="#02041a"/>
<ellipse cx="830" cy="420" rx="30" ry="25" fill="#0e2090"/>
</g>
<g filter="url(#b8)">
<path d="M895 140 L922 140 L952 650 L905 650 Z" fill="#01030c"/>
</g>
<g filter="url(#b4)">
<path d="M922 140 L952 140 L1006 650 L948 650 Z" fill="#081c58"/>
<path d="M926 160 L954 160 L962 240 L930 240 Z" fill="#061238"/>
<rect x="944" y="165" width="14" height="35" fill="#1a50c0" opacity="0.8"/>
<path d="M930 250 L966 250 L971 300 L934 300 Z" fill="#a02a30"/>
<path d="M934 303 L971 303 L976 345 L938 345 Z" fill="#f05818"/>
<path d="M941 366 L978 362 L980 380 L943 383 Z" fill="#ffb818"/>
<path d="M944 390 L982 390 L986 428 L948 428 Z" fill="#1a48c0"/>
<path d="M948 428 L986 428 L994 495 L952 495 Z" fill="#3a7ce8"/>
<path d="M952 495 L994 495 L1008 640 L958 640 Z" fill="#123aa0"/>
</g>
<g filter="url(#b2)">
<rect x="930" y="292" width="30" height="6" fill="#70b0ff"/>
<rect x="955" y="443" width="34" height="8" fill="#b0d8ff" opacity="0.8"/>
<rect x="958" y="465" width="30" height="6" fill="#a0c8ff" opacity="0.7"/>
</g>
<path d="M949 140 L960 140 L1016 650 L1003 650 Z" fill="#020618" filter="url(#b2)"/>
<g filter="url(#b8)">
<path d="M962 140 L1045 140 L1052 330 L980 330 Z" fill="#1638b0"/>
<path d="M982 330 L1052 330 L1060 450 L995 450 Z" fill="#102a8a"/>
<path d="M996 450 L1060 450 L1068 650 L1012 650 Z" fill="#0a1c62"/>
<path d="M1040 390 L1085 390 L1088 545 L1045 545 Z" fill="#1a3ab0" opacity="0.85"/>
</g>
<g filter="url(#b4)">
<path d="M968 155 L982 155 L992 320 L980 320 Z" fill="#2e60e8" opacity="0.6"/>
<path d="M995 155 L1003 155 L1010 330 L1002 330 Z" fill="#0c2490" opacity="0.6"/>
<path d="M1015 155 L1030 155 L1036 300 L1022 300 Z" fill="#3068e8" opacity="0.5"/>
<rect x="1005" y="460" width="30" height="25" fill="#4a8af0" opacity="0.8"/>
<circle cx="1010" cy="467" r="7" fill="#e0f0ff"/>
<circle cx="1047" cy="490" r="5" fill="#c0e0ff"/>
<circle cx="1051" cy="510" r="4" fill="#6aa0ff"/>
<circle cx="1000" cy="285" r="6" fill="#e0f0ff"/>
</g>
<g filter="url(#b14)">
<rect x="1045" y="130" width="130" height="105" fill="#061650"/><rect x="1040" y="150" width="60" height="80" fill="#0c2c98"/>
<rect x="1058" y="245" width="115" height="140" fill="#020418"/>
<rect x="1088" y="395" width="85" height="120" fill="#1a4ac8"/>
<rect x="1085" y="520" width="90" height="130" fill="#060c38"/>
</g>
<g filter="url(#b4)">
<path d="M1056 182 L1094 172 L1096 188 L1058 198 Z" fill="#2088f8"/><path d="M1030 195 L1055 190 L1057 222 L1032 228 Z" fill="#1a60e0"/>
<path d="M1064 205 L1102 197 L1104 210 L1066 218 Z" fill="#2088f8"/><ellipse cx="1130" cy="162" rx="8" ry="6" fill="#1a50d0"/>
<ellipse cx="1121" cy="220" rx="11" ry="19" fill="#b87830"/>
<ellipse cx="1092" cy="373" rx="13" ry="19" fill="#f0f8ff"/>
<ellipse cx="1059" cy="266" rx="11" ry="8" fill="#f0f8ff"/>





<circle cx="1091" cy="556" r="7" fill="#c8e8ff"/><ellipse cx="1105" cy="421" rx="10" ry="5" fill="#9ad0ff"/><ellipse cx="1140" cy="414" rx="16" ry="6" fill="#b0dcff"/><ellipse cx="1108" cy="438" rx="10" ry="5" fill="#9ad0ff"/><ellipse cx="1145" cy="440" rx="14" ry="6" fill="#a8d8ff"/><ellipse cx="1110" cy="452" rx="12" ry="6" fill="#b8e0ff"/><ellipse cx="1125" cy="450" rx="8" ry="6" fill="#e0f0ff"/><ellipse cx="1145" cy="464" rx="12" ry="5" fill="#90c8ff"/><ellipse cx="1108" cy="470" rx="9" ry="6" fill="#a0d0ff"/><ellipse cx="1098" cy="490" rx="12" ry="10" fill="#e8f4ff"/><ellipse cx="1115" cy="482" rx="8" ry="7" fill="#c8e4ff"/><circle cx="1048" cy="492" r="5" fill="#c0e0ff"/><circle cx="1120" cy="380" rx="10" r="8" fill="#e0f0ff" opacity="0.7"/>
<circle cx="1135" cy="485" r="5" fill="#ffd090" opacity="0.7"/>
<circle cx="1135" cy="495" r="5" fill="#ffd090" opacity="0.7"/>
<circle cx="1152" cy="483" r="5" fill="#ffd090" opacity="0.5"/>
<circle cx="948" cy="480" r="4.5" fill="#ffb030"/>
<rect x="945" y="460" width="10" height="20" fill="#d03020" opacity="0.8"/>
</g>
<linearGradient id="dotfade" x1="730" y1="0" x2="935" y2="0" gradientUnits="userSpaceOnUse"><stop offset="0" stop-color="#fff" stop-opacity="1"/><stop offset="0.75" stop-color="#fff" stop-opacity="0.7"/><stop offset="1" stop-color="#fff" stop-opacity="0"/></linearGradient>
<mask id="dotmask"><rect x="730" y="155" width="210" height="480" fill="url(#dotfade)"/></mask>
<pattern id="ledd" x="730" y="155" width="4.6" height="4.6" patternUnits="userSpaceOnUse"><circle cx="2.3" cy="2.3" r="1.0" fill="#3050d0"/></pattern>
<pattern id="ledd2" x="730" y="155" width="5.4" height="9.5" patternUnits="userSpaceOnUse" patternTransform="skewY(-8)"><rect x="1.8" y="3" width="1.8" height="3" fill="#4a68e0"/></pattern>
<g mask="url(#dotmask)">
<rect x="730" y="155" width="210" height="300" fill="url(#ledd)" opacity="0.45"/>
<rect x="730" y="455" width="210" height="180" fill="url(#ledd2)" opacity="0.75"/>
</g>
<g filter="url(#b2)">
<path d="M826 222 L842 222 L844 262 L830 266 Z" fill="#1a9888" opacity="0.45"/>
<path d="M831 278 L898 282 L900 326 L834 326 Z" fill="#139888"/>
<path d="M840 306 C838 290 840 262 852 250 C860 244 872 248 878 262 C883 275 881 295 878 308 Z" fill="#f0501a"/>
<path d="M838 356 L838 326 C840 318 850 314 870 313 C885 312 895 316 896 326 L897 350 Z" fill="#ff6618"/>
<rect x="826" y="230" width="4" height="120" fill="#a01830"/>
</g>
<pattern id="tled" x="730" y="155" width="4.4" height="4.4" patternUnits="userSpaceOnUse"><circle cx="2.2" cy="2.2" r="1.75" fill="#5ff8e0"/></pattern>
<pattern id="tled2" x="0" y="0" width="4.4" height="4.4" patternUnits="userSpaceOnUse"><circle cx="2.2" cy="2.2" r="1.6" fill="#fff"/></pattern>
<path d="M770 155 h26 l3 24 z M768 258 l16 -25 l16 46 z M776 385 l14 -32 l16 45 z" fill="#30d8c0" opacity="0.5" filter="url(#b2)"/>
<path d="M770 155 h26 l3 24 z M768 258 l16 -25 l16 46 z M776 385 l14 -32 l16 45 z" fill="url(#tled)"/>
<path d="M851 381 C846 383 847 412 850 417 C852 421 857 421 857 416 C858 405 857 392 856 388 C855 383 853 381 851 381 M868 392 L867 423 M864 425 L869 425 M876 397 L874 430 M876 412 C880 405 884 402 886 401 M877 414 L885 432 M845 212 C844 222 846 236 848 247 M849.5 212 C848.5 222 850.5 236 852.5 247 M859 233 C858 243 860 255 862 264 M863.5 233 C862.5 243 864.5 255 866.5 264 M868 496 C864 500 864 535 869 539 C873 536 874 500 869 496 M887 495 C883 499 883 535 888 539 C893 536 893 499 887 495 M847 286 L846 330 M852 290 L851 330" fill="none" stroke="#30d8c0" stroke-width="5" opacity="0.35" filter="url(#b2)"/>
<path d="M851 381 C846 383 847 412 850 417 C852 421 857 421 857 416 C858 405 857 392 856 388 C855 383 853 381 851 381 M868 392 L867 423 M864 425 L869 425 M876 397 L874 430 M876 412 C880 405 884 402 886 401 M877 414 L885 432 M845 212 C844 222 846 236 848 247 M849.5 212 C848.5 222 850.5 236 852.5 247 M859 233 C858 243 860 255 862 264 M863.5 233 C862.5 243 864.5 255 866.5 264 M868 496 C864 500 864 535 869 539 C873 536 874 500 869 496 M887 495 C883 499 883 535 888 539 C893 536 893 499 887 495 M847 286 L846 330 M852 290 L851 330" fill="none" stroke="#68f8e0" stroke-width="3.8" stroke-linecap="round" stroke-dasharray="0 4"/>
<path d="M780 499 L808 499 M778 511 L810 511 M776 524 L812 524 M776 537 L814 537" fill="none" stroke="#30d0b0" stroke-width="5" opacity="0.3" filter="url(#b2)"/>
<path d="M780 499 L808 499 M778 511 L810 511 M776 524 L812 524 M776 537 L814 537" fill="none" stroke="#68f8e0" stroke-width="3.6" stroke-linecap="round" stroke-dasharray="0 4.2"/>
<path d="M860 298 L862 322 M866 312 C872 318 874 326 870 332 M864 336 L876 344" fill="none" stroke="#ffffff" stroke-width="3" stroke-linecap="round" stroke-dasharray="0 4.3"/>
<g filter="url(#b4)"><rect x="728" y="170" width="22" height="62" rx="8" fill="#1428f0"/></g>
<pattern id="wled" x="0" y="0" width="5.3" height="5.3" patternUnits="userSpaceOnUse"><circle cx="2.65" cy="2.65" r="1.5" fill="#e0e8ff"/></pattern>
<path d="M735 175 L740 180 L741 190 M735 195 L740 200 L741 212 L737 222 L741 226 M733 198 L733 218" fill="none" stroke="#e8eeff" stroke-width="2.6" stroke-linecap="round" stroke-dasharray="0 4.4"/>
<path d="M733 305 L733 362 M738 312 L738 340" fill="none" stroke="#e8eeff" stroke-width="2.4" stroke-linecap="round" stroke-dasharray="0 5" opacity="0.85"/>
<path d="M733 483 L733 540 M738 497 L738 530" fill="none" stroke="#e8eeff" stroke-width="2.4" stroke-linecap="round" stroke-dasharray="0 6" opacity="0.85"/>
<g filter="url(#b1)">
<circle cx="748" cy="390" r="6" fill="#fff6c0"/>
<circle cx="880" cy="458" r="4.5" fill="#ffe080"/>
<circle cx="857" cy="542" r="5.5" fill="#ffffff"/>
<circle cx="905" cy="518" r="5" fill="#ffffff"/>
<circle cx="770" cy="375" r="8" fill="#2040e0" opacity="0.8"/>
<ellipse cx="904" cy="475" rx="13" ry="11" fill="#e04020"/>
<ellipse cx="904" cy="478" rx="8" ry="5" fill="#80a0ff"/>
<circle cx="893" cy="462" r="4" fill="#ffb030"/>
</g>
</g>
</g>
<text x="7" y="667" font-size="10" fill="#5e5e5e" font-weight="normal" textLength="58.0" lengthAdjust="spacingAndGlyphs" stroke="#5e5e5e" stroke-width="0.25" >Слайд 1 из 5</text>
<text x="94" y="667" font-size="10" fill="#505050" font-weight="bold" textLength="36.5" lengthAdjust="spacingAndGlyphs" >русский</text>
<g fill="none" stroke="#555" stroke-width="1"><path d="M146.5 662 a5.5 5.5 0 0 0 3 5"/><path d="M150 664.5 l2.2 2.2 l4.5 -4.5"/><path d="M152 656 v4 M149 659 l3 -1.5 l3 1.5 M157 661 v-3 M155.5 659.5 h3"/></g>
<text x="162" y="667" font-size="10" fill="#5a5a5a" font-weight="normal" textLength="203.0" lengthAdjust="spacingAndGlyphs" stroke="#5a5a5a" stroke-width="0.25" >Специальные возможности: все в порядке</text>
<g fill="none" stroke="#444" stroke-width="1"><path d="M783 660.5 h13 M783 663.5 h13 M783 666.5 h13 M786 657 l3 -2 l3 2"/></g>
<text x="798.6" y="667" font-size="10" fill="#505050" font-weight="normal" textLength="38.6" lengthAdjust="spacingAndGlyphs" stroke="#505050" stroke-width="0.25" >Заметки</text>
<path d="M856.5 657.5 h11 v8 h-7 l-3 3 v-3 h-1 z" fill="none" stroke="#444" stroke-width="1"/>
<text x="870.5" y="667" font-size="10" fill="#505050" font-weight="normal" textLength="60.9" lengthAdjust="spacingAndGlyphs" stroke="#505050" stroke-width="0.25" >Примечания</text>
<rect x="949" y="654" width="35" height="19" fill="#d4d4d4" />
<g fill="none" stroke="#444" stroke-width="1">
<rect x="959.5" y="657.5" width="13" height="10"/><rect x="961.5" y="659.5" width="9" height="5"/>
<rect x="996.5" y="657.5" width="5" height="4"/><rect x="1003.5" y="657.5" width="5" height="4"/><rect x="996.5" y="664.5" width="5" height="4"/><rect x="1003.5" y="664.5" width="5" height="4"/>
<rect x="1031.5" y="657.5" width="12" height="10"/><path d="M1037.5 657.5 v10 M1033.5 660 h2 M1033.5 662 h2 M1039.5 660 h2 M1039.5 662 h2"/>
<rect x="1068.5" y="657.5" width="10" height="7"/><path d="M1073.5 664.5 v4 M1071 668.5 h5"/>
<path d="M1097 663.5 h6 M1202 663.5 h6 M1205 660.5 v6"/>
<path d="M1109 663.5 h88" stroke="#999"/>
</g>
<rect x="1140" y="658" width="4" height="10" fill="#444" />
<rect x="1153" y="661" width="1" height="5" fill="#999" />
<text x="1221" y="667" font-size="10" fill="#5a5a5a" font-weight="normal" textLength="20.4" lengthAdjust="spacingAndGlyphs" stroke="#5a5a5a" stroke-width="0.25" >76 %</text>
<g fill="none" stroke="#555" stroke-width="1"><rect x="1255.5" y="660.5" width="7" height="6"/></g><path d="M1259 655.5 l2 2.5 h-4 z M1259 671.5 l2 -2.5 h-4 z M1252 663.5 l2.5 -2 v4 z M1266 663.5 l-2.5 -2 v4 z" fill="#555"/>
</g></svg>
</body></html>
